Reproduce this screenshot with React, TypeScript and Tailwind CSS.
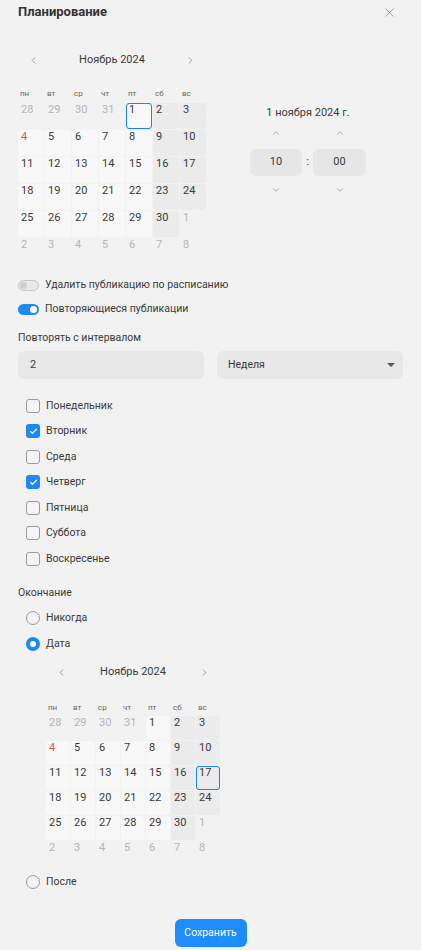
import { ChevronDown, ChevronLeft, ChevronRight, ChevronUp, X, Check } from 'lucide-react'

type Day = { n: number; kind: 'prev' | 'cur' | 'next' }

// November 2024 starts on Friday
function buildDays(): Day[] {
  const days: Day[] = []
  for (const n of [28, 29, 30, 31]) days.push({ n, kind: 'prev' })
  for (let n = 1; n <= 30; n++) days.push({ n, kind: 'cur' })
  for (let n = 1; n <= 8; n++) days.push({ n, kind: 'next' })
  return days
}

const WEEKDAYS = ['пн', 'вт', 'ср', 'чт', 'пт', 'сб', 'вс']
const DAYS = buildDays()

function Calendar({ selected, cell }: { selected: number; cell: 'lg' | 'sm' }) {
  const big = cell === 'lg'
  return (
    <div className={big ? 'w-[188px]' : 'w-[174px]'}>
      <div className="flex h-[20px] items-center justify-between px-[10px] text-[#777]">
        <ChevronLeft size={11} strokeWidth={1.5} />
        <span className="text-[11px] text-[#3a3a3a]">Ноябрь 2024</span>
        <ChevronRight size={11} strokeWidth={1.5} />
      </div>
      <div className={`grid grid-cols-7 gap-px ${big ? 'mt-[19px]' : 'mt-[20px]'}`}>
        {WEEKDAYS.map((w) => (
          <div key={w} className="h-[10px] pl-[2px] text-[8px] leading-[10px] text-[#666]">
            {w}
          </div>
        ))}
      </div>
      <div className={`grid grid-cols-7 gap-px ${big ? 'mt-[4px]' : 'mt-[3px]'}`}>
        {DAYS.map((d, i) => {
          const col = i % 7
          const weekend = col >= 5
          const cur = d.kind === 'cur'
          const isSel = cur && d.n === selected
          let bg = 'bg-transparent'
          if (cur) bg = weekend ? 'bg-[#ebebeb]' : 'bg-[#f8f8f8]'
          const color = !cur ? 'text-[#b5b5b5]' : d.n === 4 ? 'text-[#f04b4b]' : 'text-[#3a3a3a]'
          return (
            <div
              key={i}
              className={`${big ? 'h-[26px]' : 'h-[24px]'} rounded-[3px] pl-[3px] text-[11px] leading-[14px] ${bg} ${color} ${
                isSel ? 'outline outline-1 -outline-offset-1 outline-[#1a84f0]' : ''
              }`}
            >
              {d.n}
            </div>
          )
        })}
      </div>
    </div>
  )
}

function Toggle({ on, label }: { on: boolean; label: string }) {
  return (
    <div className="flex h-[14px] items-center gap-[6px]">
      {on ? (
        <div className="flex h-[11px] w-[21px] items-center justify-end rounded-full bg-[#1e88f5] pr-[2px]">
          <div className="h-[7px] w-[7px] rounded-full bg-white" />
        </div>
      ) : (
        <div className="flex h-[11px] w-[21px] items-center rounded-full border border-[#c8c8c8] bg-[#e8e8e8] pl-[1px]">
          <div className="h-[7px] w-[7px] rounded-full bg-[#cfcfcf]" />
        </div>
      )}
      <span className="text-[10.5px] text-[#3a3a3a]">{label}</span>
    </div>
  )
}

function CheckRow({ checked, label }: { checked: boolean; label: string }) {
  return (
    <div className="flex h-[25.5px] items-center gap-[6px] pl-[8px]">
      {checked ? (
        <div className="flex h-[14px] w-[14px] items-center justify-center rounded-[3px] bg-[#1e88f5] text-white">
          <Check size={9} strokeWidth={3} />
        </div>
      ) : (
        <div className="h-[14px] w-[14px] rounded-[3px] border border-[#9a9a9a] bg-[#f5f5f5]" />
      )}
      <span className="text-[10.5px] text-[#3a3a3a]">{label}</span>
    </div>
  )
}

function RadioRow({ checked, label }: { checked: boolean; label: string }) {
  return (
    <div className="flex h-[26px] items-center gap-[6px] pl-[8px]">
      {checked ? (
        <div className="h-[14px] w-[14px] rounded-full border-[4px] border-[#1e88f5] bg-white" />
      ) : (
        <div className="h-[14px] w-[14px] rounded-full border border-[#9a9a9a] bg-[#f5f5f5]" />
      )}
      <span className="text-[10.5px] text-[#3a3a3a]">{label}</span>
    </div>
  )
}

export default function App() {
  return (
    <div
      className="min-h-[950px] w-[421px] bg-[#f2f2f2] px-[18px] text-[#3a3a3a]"
      style={{ fontFamily: 'Roboto, "Noto Sans", sans-serif' }}
    >
      {/* Header */}
      <div className="flex h-[24px] items-center justify-between">
        <span className="text-[13px] font-bold text-[#333]">Планирование</span>
        <X size={15} strokeWidth={1.1} className="mr-[6px] text-[#777]" />
      </div>

      {/* Date + time */}
      <div className="mt-[26px] flex">
        <Calendar selected={1} cell="lg" />
        <div className="ml-[44px] flex w-[116px] flex-col items-center">
          <div className="mt-[56px] text-[11px] leading-[14px]">1 ноября 2024 г.</div>
          <div className="mt-[8px] flex w-full items-center text-[#888]">
            <div className="flex w-[52px] justify-center">
              <ChevronUp size={10} strokeWidth={1.5} />
            </div>
            <div className="w-[11px]" />
            <div className="flex w-[53px] justify-center">
              <ChevronUp size={10} strokeWidth={1.5} />
            </div>
          </div>
          <div className="mt-[11px] flex w-full items-center">
            <div className="flex h-[27px] w-[52px] items-center justify-center rounded-[6px] bg-[#e6e6e6] text-[11px]">
              10
            </div>
            <div className="w-[11px] text-center text-[11px]">:</div>
            <div className="flex h-[27px] w-[53px] items-center justify-center rounded-[6px] bg-[#e6e6e6] text-[11px]">
              00
            </div>
          </div>
          <div className="mt-[9px] flex w-full items-center text-[#888]">
            <div className="flex w-[52px] justify-center">
              <ChevronDown size={10} strokeWidth={1.5} />
            </div>
            <div className="w-[11px]" />
            <div className="flex w-[53px] justify-center">
              <ChevronDown size={10} strokeWidth={1.5} />
            </div>
          </div>
        </div>
      </div>

      {/* Toggles */}
      <div className="mt-[14px] flex flex-col gap-[10px]">
        <Toggle on={false} label="Удалить публикацию по расписанию" />
        <Toggle on label="Повторяющиеся публикации" />
      </div>

      {/* Interval */}
      <div className="mt-[15px] text-[10.5px] leading-[14px]">Повторять с интервалом</div>
      <div className="mt-[6px] flex gap-[13px]">
        <div className="flex h-[28px] w-[186px] items-center rounded-[6px] bg-[#e8e8e8] px-[12px] text-[11px]">
          2
        </div>
        <div className="flex h-[28px] flex-1 items-center justify-between rounded-[6px] bg-[#e8e8e8] pl-[11px] pr-[8px] text-[10.5px]">
          <span>Неделя</span>
          <span className="h-0 w-0 border-x-[4px] border-t-[4px] border-x-transparent border-t-[#555]" />
        </div>
      </div>

      {/* Weekdays */}
      <div className="mt-[14px] flex flex-col">
        <CheckRow checked={false} label="Понедельник" />
        <CheckRow checked label="Вторник" />
        <CheckRow checked={false} label="Среда" />
        <CheckRow checked label="Четверг" />
        <CheckRow checked={false} label="Пятница" />
        <CheckRow checked={false} label="Суббота" />
        <CheckRow checked={false} label="Воскресенье" />
      </div>

      {/* Ending */}
      <div className="mt-[14px] text-[10.5px] leading-[14px]">Окончание</div>
      <div className="mt-[5px] flex flex-col">
        <RadioRow checked={false} label="Никогда" />
        <RadioRow checked label="Дата" />
      </div>
      <div className="ml-[28px] mt-[6px]">
        <Calendar selected={17} cell="sm" />
      </div>
      <div className="mt-[4px]">
        <RadioRow checked={false} label="После" />
      </div>

      <div className="mt-[24px] flex justify-center">
        <button className="h-[28px] w-[72px] rounded-[6px] bg-[#1e8cfa] text-[10.5px] text-white">
          Сохранить
        </button>
      </div>
    </div>
  )
}
